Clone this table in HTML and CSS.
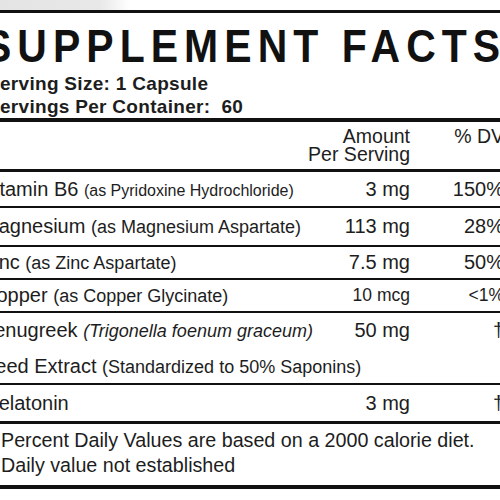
FILE: index.html
```html
<!DOCTYPE html>
<html lang="en">
<head>
  <meta charset="UTF-8" />
  <title>Supplement Facts</title>
  <link rel="stylesheet" href="styles.css">
</head>
<body>

  <div class="shade"></div>

  <div class="label">
    <h1 class="title">SUPPLEMENT FACTS</h1>

    <div class="serving">
      <p>Serving Size: 1 Capsule</p>
      <p>Servings Per Container:&nbsp; 60</p>
    </div>

    <div class="row head">
      <span class="amt">Amount<br>Per Serving</span>
      <span class="dv">% DV</span>
    </div>

    <div class="row r-b6">
      <span class="name">Vitamin B6 <small class="xs">(as Pyridoxine Hydrochloride)</small></span>
      <span class="amt">3 mg</span>
      <span class="dv">150%</span>
    </div>

    <div class="row r-mg">
      <span class="name">Magnesium <small>(as Magnesium Aspartate)</small></span>
      <span class="amt">113 mg</span>
      <span class="dv">28%</span>
    </div>

    <div class="row r-zn">
      <span class="name">Zinc <small>(as Zinc Aspartate)</small></span>
      <span class="amt">7.5 mg</span>
      <span class="dv">50%</span>
    </div>

    <div class="row r-cu">
      <span class="name">Copper <small>(as Copper Glycinate)</small></span>
      <span class="amt sm">10 mcg</span>
      <span class="dv sm">&lt;1%</span>
    </div>

    <div class="row tall">
      <span class="name">Fenugreek <small><i>(Trigonella foenum graceum)</i></small><br>Seed Extract <small>(Standardized to 50% Saponins)</small></span>
      <span class="amt">50 mg</span>
      <span class="dv">†</span>
    </div>

    <div class="row last">
      <span class="name">Melatonin</span>
      <span class="amt">3 mg</span>
      <span class="dv">†</span>
    </div>

    <div class="notes">
      <p><span class="mark">†</span>Percent Daily Values are based on a 2000 calorie diet.</p>
      <p><span class="mark">*</span>Daily value not established</p>
    </div>
  </div>

</body>
</html>
```

FILE: styles.css
```css
html, body {
  margin: 0;
  background: #fff;
  overflow: hidden;
}

body {
  font-family: 'Liberation Sans', Arial, sans-serif;
  color: #1d1d1d;
  width: 500px;
  height: 500px;
}

.shade {
  height: 10px;
  background: linear-gradient(to right, #e4e4e4 0, #e8e8e8 100px, #fff 130px);
}

.label {
  margin-left: -18px;
  width: 522px;
  border-top: 3px solid #111;
}

/* the label face is a touch narrower than Arial, hence the squeeze */
.title {
  margin: 10px 0 0 2px;
  font-size: 46px;
  line-height: 46px;
  font-weight: bold;
  letter-spacing: 6.8px;
  white-space: nowrap;
  color: #111;
  transform: scaleX(0.89);
  transform-origin: left center;
}

.serving {
  margin-top: 3px;
  border-bottom: 4px solid #111;
}

.serving p {
  margin: 0;
  font-size: 19px;
  line-height: 23px;
  font-weight: bold;
  letter-spacing: 0.3px;
  padding-left: 5px;
}

.row {
  display: grid;
  grid-template-columns: minmax(0, 1fr) 70px 94px;
  height: 34px;
  line-height: 34px;
  font-size: 20px;
  border-bottom: 2px solid #111;
  white-space: nowrap;
}

.row .amt,
.row .dv {
  text-align: right;
}

.row small {
  font-size: 18px;
}

.row small.xs {
  font-size: 16px;
}

.row .sm {
  font-size: 17.5px;
}

.row.head {
  height: auto;
  padding: 5px 0 6px;
  line-height: 18px;
  font-size: 19.5px;
  border-bottom-width: 3px;
}

.row.head .amt {
  grid-column: 1 / span 2;
}

.row.r-mg {
  height: 37px;
  line-height: 37px;
}

.row.r-zn,
.row.r-cu {
  height: 31px;
  line-height: 31px;
}

.row.tall {
  height: 70px;
  line-height: 35px;
}

.row.last {
  border-bottom-width: 3px;
  height: 36px;
  line-height: 36px;
}

.notes {
  padding: 4px 0 7px;
  border-bottom: 4px solid #111;
}

.notes p {
  margin: 0;
  font-size: 19.7px;
  line-height: 25px;
  white-space: nowrap;
}

.notes .mark {
  display: inline-block;
  width: 19px;
}
```
